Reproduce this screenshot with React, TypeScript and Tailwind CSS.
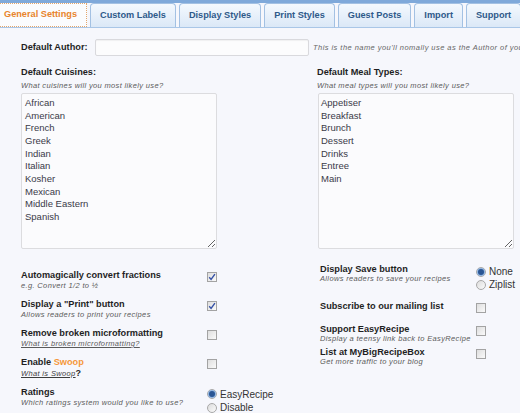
import React from "react";

const F = { fontFamily: '"Liberation Sans", Arial, sans-serif' };

function Check({ checked }: { checked?: boolean }) {
  return (
    <span className="w-[10px] h-[10px] shrink-0 border border-[#a3a3a3] bg-gradient-to-br from-[#dedede] to-[#fafafa] flex items-center justify-center">
      {checked && (
        <svg width="8" height="8" viewBox="0 0 8 8">
          <path d="M1.2 4.2 L3.1 6.4 L6.9 1.2" stroke="#3551a6" strokeWidth="1.4" fill="none" />
        </svg>
      )}
    </span>
  );
}

function Radio({ checked }: { checked?: boolean }) {
  return (
    <span className="w-[10px] h-[10px] shrink-0 rounded-full border border-[#a8a8a8] bg-gradient-to-br from-[#dcdcdc] to-[#fbfbfb] flex items-center justify-center">
      {checked && <span className="w-[6px] h-[6px] rounded-full bg-[#2a5694] ring-1 ring-[#8fb4e0]" />}
    </span>
  );
}

const tabs = ["Custom Labels", "Display Styles", "Print Styles", "Guest Posts", "Import", "Support"];

const cuisines = ["African", "American", "French", "Greek", "Indian", "Italian", "Kosher", "Mexican", "Middle Eastern", "Spanish"];
const meals = ["Appetiser", "Breakfast", "Brunch", "Dessert", "Drinks", "Entree", "Main"];

const label = "text-[9.2px] font-bold leading-[11px] text-[#1f1f1f] whitespace-nowrap";
const hint = "text-[7.5px] italic tracking-[0.35px] leading-[10px] text-[#5a5a5a] whitespace-nowrap";
const hintR = "text-[7.5px] italic tracking-[0.35px] leading-[8px] text-[#5a5a5a] whitespace-nowrap";

export default function App() {
  return (
    <div style={F} className="w-[520px] h-[413px] overflow-hidden bg-[#f6f7fc]">
      {/* Tabs */}
      <div className="border-t-[3px] border-[#7fa9da]">
        <div className="flex h-[25px] border-b border-[#a9c6e7] gap-[3px] -ml-[6px]">
          <div className="shrink-0 px-[9px] flex items-center border border-dotted border-[#e3a66c] bg-[#fbfcfe] text-[9.2px] font-bold text-[#e8842c] whitespace-nowrap">
            General Settings
          </div>
          {tabs.map((t) => (
            <div
              key={t}
              className="shrink-0 px-[9px] flex items-center rounded-t-[4px] border border-b-0 border-[#a3c1e3] bg-gradient-to-b from-[#f4f9fe] to-[#dbe8f7] text-[9.2px] font-bold text-[#2e5a8a] whitespace-nowrap"
            >
              {t}
            </div>
          ))}
        </div>
      </div>

      <div className="pl-[21px] pt-[11px]">
        {/* Author */}
        <div className="flex items-center h-[17px]">
          <div className={`${label} w-[74px] shrink-0`}>Default Author:</div>
          <div className="w-[214px] shrink-0 h-[17px] border border-[#d9d9dd] rounded-[2px] bg-[#fcfcfd] shadow-[inset_0_1px_1px_rgba(0,0,0,0.05)]" />
          <div className={`${hint} ml-[4px] shrink-0 text-[#666] tracking-[0.45px]`}>This is the name you'll nomally use as the Author of your recipes</div>
        </div>

        {/* Lists */}
        <div className="flex mt-[11px]">
          <div className="w-[296px] shrink-0">
            <div className={label}>Default Cuisines:</div>
            <div className={`${hint} leading-[15px]`}>What cuisines will you most likely use?</div>
            <textarea
              defaultValue={cuisines.join("\n")}
              className="block w-[196px] h-[156px] border border-[#dcdcdf] rounded-[2px] bg-[#fbfbfd] pl-[3px] pt-[3px] text-[9.5px] leading-[12.67px] text-[#3a3a48] outline-none resize"
              style={F}
            />
          </div>
          <div>
            <div className={label}>Default Meal Types:</div>
            <div className={`${hint} leading-[15px]`}>What meal types will you most likely use?</div>
            <textarea
              defaultValue={meals.join("\n")}
              className="block ml-[1px] w-[196px] h-[156px] border border-[#dcdcdf] rounded-[2px] bg-[#fbfbfd] pl-[2px] pt-[3px] text-[9.5px] leading-[12.67px] text-[#3a3a48] outline-none resize"
              style={F}
            />
          </div>
        </div>

        {/* Options */}
        <div className="flex mt-[15px]">
          <div className="w-[299px] shrink-0 pt-[6px] flex flex-col gap-[8px]">
            <div className="flex items-start">
              <div className="w-[186px] shrink-0">
                <div className={label}>Automagically convert fractions</div>
                <div className={hint}>e.g. Convert 1/2 to ½</div>
              </div>
              <div className="mt-[2px]"><Check checked /></div>
            </div>
            <div className="flex items-start">
              <div className="w-[186px] shrink-0">
                <div className={label}>Display a "Print" button</div>
                <div className={hint}>Allows readers to print your recipes</div>
              </div>
              <div className="mt-[2px]"><Check checked /></div>
            </div>
            <div className="flex items-start">
              <div className="w-[186px] shrink-0">
                <div className={label}>Remove broken microformatting</div>
                <div className={`${hint} underline text-[#3d3d3d]`}>What is broken microformatting?</div>
              </div>
              <div className="mt-[2px]"><Check /></div>
            </div>
            <div className="flex items-start">
              <div className="w-[186px] shrink-0">
                <div className={label}>
                  Enable <span className="text-[#f5973a]">Swoop</span>
                </div>
                <div className={hint}>
                  <span className="underline text-[#3d3d3d]">What is Swoop</span>
                  <span className="not-italic font-bold text-[9px] text-[#1f1f1f] tracking-normal">?</span>
                </div>
              </div>
              <div className="mt-[2px]"><Check /></div>
            </div>
            <div className="flex items-start">
              <div className="w-[186px] shrink-0">
                <div className={label}>Ratings</div>
                <div className={hint}>Which ratings system would you like to use?</div>
              </div>
              <div className="mt-[0.5px] flex flex-col">
                <div className="flex items-center gap-[3px] h-[13.4px]">
                  <Radio checked />
                  <span className="text-[10px] text-[#333]">EasyRecipe</span>
                </div>
                <div className="flex items-center gap-[3px] h-[13.4px]">
                  <Radio />
                  <span className="text-[10px] text-[#333]">Disable</span>
                </div>
              </div>
            </div>
          </div>

          <div className="flex flex-col">
            <div className="flex items-start">
              <div className="w-[156px] shrink-0">
                <div className={label}>Display Save button</div>
                <div className={hintR}>Allows readers to save your recipes</div>
              </div>
              <div className="mt-[1px] flex flex-col">
                <div className="flex items-center gap-[3px] h-[13.3px]">
                  <Radio checked />
                  <span className="text-[10px] text-[#333]">None</span>
                </div>
                <div className="flex items-center gap-[3px] h-[13.3px]">
                  <Radio />
                  <span className="text-[10px] text-[#333]">Ziplist</span>
                </div>
              </div>
            </div>
            <div className="flex items-start mt-[9.4px]">
              <div className="w-[156px] shrink-0">
                <div className={label}>Subscribe to our mailing list</div>
              </div>
              <div className="mt-[2px]"><Check /></div>
            </div>
            <div className="flex items-start mt-[11.3px]">
              <div className="w-[156px] shrink-0">
                <div className={label}>Support EasyRecipe</div>
                <div className={hintR}>Display a teensy link back to EasyRecipe</div>
              </div>
              <div className="mt-[1.5px]"><Check /></div>
            </div>
            <div className="flex items-start mt-[4px]">
              <div className="w-[156px] shrink-0">
                <div className={label}>List at MyBigRecipeBox</div>
                <div className={hintR}>Get more traffic to your blog</div>
              </div>
              <div className="mt-[2px]"><Check /></div>
            </div>
          </div>
        </div>
      </div>
    </div>
  );
}
